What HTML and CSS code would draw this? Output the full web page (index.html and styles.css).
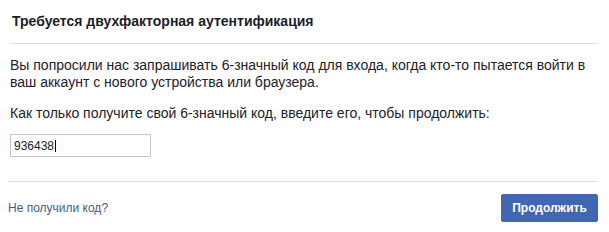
FILE: index.html
```html
<!DOCTYPE html>
<html lang="ru">
<head>
<meta charset="utf-8">
<link rel="stylesheet" href="styles.css">
</head>
<body>
<div class="dialog">
  <div class="header">
    <h2 class="title">Требуется двухфакторная аутентификация</h2>
  </div>
  <div class="content">
    <p class="text text-intro">Вы попросили нас запрашивать 6-значный код для входа, когда кто-то пытается войти в ваш аккаунт с нового устройства или браузера.</p>
    <p class="text text-prompt">Как только получите свой 6-значный код, введите его, чтобы продолжить:</p>
    <div class="code-input"><span class="code-value">936438</span><span class="caret"></span></div>
  </div>
  <div class="footer">
    <a class="link" href="#">Не получили код?</a>
    <button class="btn" type="button">Продолжить</button>
  </div>
</div>
</body>
</html>
```

FILE: styles.css
```css
html, body {
  margin: 0;
  padding: 0;
  background: #ffffff;
}
body {
  font-family: "Liberation Sans", Arial, sans-serif;
  color: #1d2129;
}
.dialog {
  width: 609px;
  height: 232px;
  background: #fff;
}
.header {
  margin: 0 11px 0 10px;
  padding: 12px 2px 13px;
  border-bottom: 1px solid #dddfe2;
}
.title {
  margin: 0;
  font-size: 14px;
  line-height: 18px;
  font-weight: bold;
  color: #1d2129;
}
.content {
  padding: 13px 11px 24px 10px;
}
.text {
  margin: 0;
  font-size: 14px;
  line-height: 17px;
  color: #1d2129;
}
.text-intro {
  margin-bottom: 14px;
}
.text-prompt {
  margin-bottom: 12px;
}
.code-input {
  display: flex;
  align-items: center;
  width: 136px;
  height: 21px;
  border: 1px solid #bdc7d8;
  padding: 0 0 0 3px;
  font-size: 12px;
  color: #1d2129;
}
.caret {
  width: 1px;
  height: 12px;
  background: #000;
  margin-left: 1px;
}
.footer {
  margin: 0 11px 0 8px;
  border-top: 1px solid #dddfe2;
  padding: 12px 0 0;
  display: flex;
  justify-content: space-between;
  align-items: center;
}
.link {
  font-size: 12px;
  color: #4b5a7a;
  text-decoration: none;
}
.btn {
  width: 97px;
  height: 28px;
  border: 1px solid #4267b2;
  border-radius: 2px;
  background: #4267b2;
  color: #fff;
  font-family: "Liberation Sans", Arial, sans-serif;
  font-size: 12px;
  font-weight: bold;
  padding: 0;
}
```
